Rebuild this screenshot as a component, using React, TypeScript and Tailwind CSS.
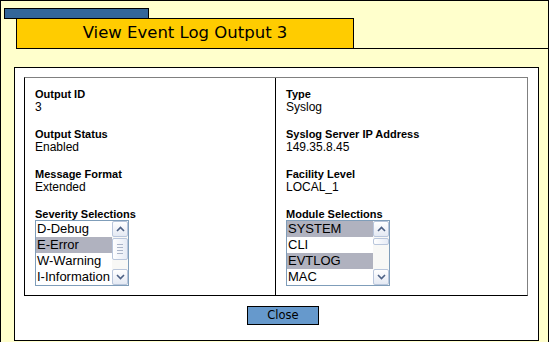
import React from 'react';

const labelCls = "font-['Liberation_Sans',Arial,sans-serif] text-[11px] leading-[12px] font-bold text-black";
const valueCls = "font-['Liberation_Sans',Arial,sans-serif] text-[12px] leading-[14px] text-black mb-[14px]";

function Chevron({ up }: { up?: boolean }) {
  return (
    <svg width="9" height="6" viewBox="0 0 9 6" className="block">
      <polyline
        points={up ? '1,5 4.5,1.5 8,5' : '1,1 4.5,4.5 8,1'}
        fill="none"
        stroke="#4d6185"
        strokeWidth="1.6"
      />
    </svg>
  );
}

function ArrowButton({ up }: { up?: boolean }) {
  return (
    <div className="w-4 h-4 shrink-0 flex items-center justify-center rounded-[2px] border border-[#b9c6dc] bg-linear-to-b from-[#ffffff] to-[#e4e9f3]">
      <Chevron up={up} />
    </div>
  );
}

function Scrollbar({ thumbTop, thumbHeight }: { thumbTop: number; thumbHeight: number }) {
  return (
    <div className="w-4 shrink-0 flex flex-col bg-[#f8f8f6]">
      <ArrowButton up />
      <div className="flex-1">
        <div
          className="w-4 rounded-[2px] border border-[#b9c6dc] bg-linear-to-r from-[#ffffff] to-[#e6ebf5] flex flex-col items-center justify-center gap-[2px]"
          style={{ marginTop: thumbTop, height: thumbHeight }}
        >
          {thumbHeight > 12 && (
            <>
              <div className="w-[6px] h-px bg-[#aab4c8]" />
              <div className="w-[6px] h-px bg-[#aab4c8]" />
              <div className="w-[6px] h-px bg-[#aab4c8]" />
              <div className="w-[6px] h-px bg-[#aab4c8]" />
            </>
          )}
        </div>
      </div>
      <ArrowButton />
    </div>
  );
}

function ListBox({
  items,
  selected,
  width,
  thumbTop,
  thumbHeight,
}: {
  items: string[];
  selected: number[];
  width: string;
  thumbTop: number;
  thumbHeight: number;
}) {
  return (
    <div className={`${width} h-[66px] flex border border-[#7f9db9] bg-white`}>
      <div className="flex-1 flex flex-col">
        {items.map((item, i) => (
          <div
            key={item}
            className={`h-4 pl-[1px] leading-4 text-[13px] font-['Liberation_Sans',Arial,sans-serif] text-black whitespace-nowrap overflow-hidden ${
              selected.includes(i) ? 'bg-[#b0b2bf]' : ''
            }`}
          >
            {item}
          </div>
        ))}
      </div>
      <Scrollbar thumbTop={thumbTop} thumbHeight={thumbHeight} />
    </div>
  );
}

function Field({ label, value }: { label: string; value: string }) {
  return (
    <div>
      <div className={labelCls}>{label}</div>
      <div className={valueCls}>{value}</div>
    </div>
  );
}

export default function App() {
  return (
    <div className="w-[550px] h-[342px] bg-white">
      <div className="w-[549px] h-[342px] bg-[#ffffcc] border-l border-t border-r border-black flex flex-col">
        {/* header tab + title */}
        <div className="pt-[7px] pl-[3px]">
          <div className="w-[145px] h-[11px] bg-[#336699] border border-black" />
        </div>
        <div className="flex -mt-px">
          <div className="w-[15px] shrink-0" />
          <div className="w-[338px] h-[31px] bg-[#ffcc00] border border-black flex items-center justify-center">
            <span className="font-['DejaVu_Sans',Verdana,sans-serif] text-[16.5px] text-black">
              View Event Log Output 3
            </span>
          </div>
          <div className="flex-1 border-b border-black" />
        </div>

        {/* content panel */}
        <div className="mt-[18px] ml-[13px] w-[525px] h-[274px] bg-white border border-black pt-[9px] pl-[9px]">
          <div className="w-[504px] h-[219px] flex border-t border-r border-[#808080] border-l-black border-b-black border-l border-b">
            <div className="w-[251px] pt-[10px] pl-[10px] border-r border-black">
              <Field label="Output ID" value="3" />
              <Field label="Output Status" value="Enabled" />
              <Field label="Message Format" value="Extended" />
              <div className={labelCls}>Severity Selections</div>
              <ListBox
                items={['D-Debug', 'E-Error', 'W-Warning', 'I-Information']}
                selected={[1]}
                width="w-[94px]"
                thumbTop={1}
                thumbHeight={22}
              />
            </div>
            <div className="flex-1 pt-[10px] pl-[10px]">
              <Field label="Type" value="Syslog" />
              <Field label="Syslog Server IP Address" value="149.35.8.45" />
              <Field label="Facility Level" value="LOCAL_1" />
              <div className={labelCls}>Module Selections</div>
              <ListBox
                items={['SYSTEM', 'CLI', 'EVTLOG', 'MAC']}
                selected={[0, 2]}
                width="w-[104px]"
                thumbTop={1}
                thumbHeight={7}
              />
            </div>
          </div>
          <div className="mt-[10px] ml-[223px] flex">
            <button className="block w-[72px] h-[19px] bg-[#6699cc] border border-black font-['DejaVu_Sans',Verdana,sans-serif] text-[11.5px] leading-[17px] text-black">
              Close
            </button>
          </div>
        </div>
      </div>
    </div>
  );
}
